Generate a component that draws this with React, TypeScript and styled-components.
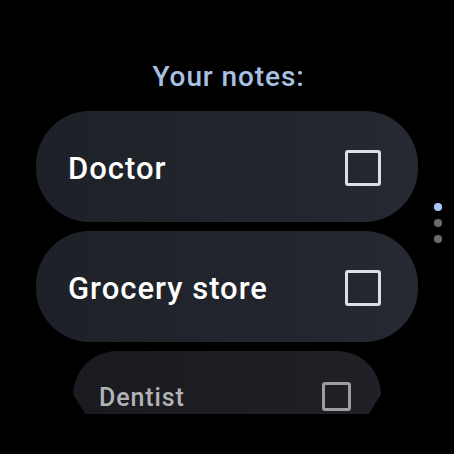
import React from "react";
import styled, { createGlobalStyle } from "styled-components";

const Global = createGlobalStyle`
  html, body { margin: 0; padding: 0; background: #000; }
  body { width: 454px; height: 454px; overflow: hidden; font-family: Roboto, "Noto Sans", sans-serif; }
`;

const Screen = styled.div`
  position: relative;
  width: 454px;
  height: 454px;
  background: #000;
  display: flex;
  flex-direction: column;
  align-items: center;
`;

const Viewport = styled.div`
  width: 100%;
  height: 414px;
  overflow: hidden;
  display: flex;
  flex-direction: column;
  align-items: center;
`;

const Title = styled.div`
  margin-top: 60px;
  height: 34px;
  line-height: 34px;
  font-size: 28px;
  font-weight: 500;
  color: #a8c0e2;
  letter-spacing: 0.9px;
  text-align: center;
  padding-left: 3px;
`;

const List = styled.div`
  margin-top: 17px;
  display: flex;
  flex-direction: column;
  align-items: center;
  gap: 9px;
`;

const Chip = styled.div<{ $small?: boolean }>`
  box-sizing: border-box;
  width: ${(p) => (p.$small ? 308 : 382)}px;
  height: ${(p) => (p.$small ? 90 : 111)}px;
  flex: none;
  border-radius: ${(p) => (p.$small ? "44px" : "54px")};
  background: ${(p) =>
    p.$small
      ? "linear-gradient(to right, #191b20, #1f2127)"
      : "linear-gradient(to right, #1d2127, #262832)"};
  display: flex;
  align-items: center;
  justify-content: space-between;
  padding: ${(p) => (p.$small ? "0 30px 0 26px" : "2px 37px 0 32px")};
  ${(p) =>
    p.$small
      ? "clip-path: polygon(0 0, 100% 0, 100% 48%, 96% 70%, 4% 70%, 0 48%);"
      : ""}
`;

const Label = styled.span<{ $small?: boolean }>`
  font-size: ${(p) => (p.$small ? 25 : 31)}px;
  line-height: 1.1;
  font-weight: 500;
  color: ${(p) => (p.$small ? "#b3b3b6" : "#ffffff")};
  letter-spacing: ${(p) => (p.$small ? 0.9 : 1)}px;
  margin-top: 4px;
`;

const Box = styled.div<{ $small?: boolean }>`
  box-sizing: border-box;
  width: ${(p) => (p.$small ? 29 : 36)}px;
  height: ${(p) => (p.$small ? 29 : 36)}px;
  border: ${(p) => (p.$small ? "3px solid #9c9ca2" : "3.5px solid #dcdde8")};
  border-radius: 3px;
  flex: none;
`;

const Dots = styled.div`
  position: absolute;
  left: 434px;
  top: 203px;
  display: flex;
  flex-direction: column;
  gap: 8.5px;
`;

const Dot = styled.div<{ $active?: boolean }>`
  width: 7.5px;
  height: 7.5px;
  border-radius: 50%;
  background: ${(p) => (p.$active ? "#a8c7fa" : "#6a6a6a")};
`;

const notes = [
  { label: "Doctor" },
  { label: "Grocery store" },
  { label: "Dentist", small: true },
];

export default function App() {
  return (
    <>
      <Global />
      <Screen>
        <Viewport>
          <Title>Your notes:</Title>
          <List>
            {notes.map((n) => (
              <Chip key={n.label} $small={n.small}>
                <Label $small={n.small}>{n.label}</Label>
                <Box $small={n.small} />
              </Chip>
            ))}
          </List>
        </Viewport>
        <Dots>
          <Dot $active />
          <Dot />
          <Dot />
        </Dots>
      </Screen>
    </>
  );
}
